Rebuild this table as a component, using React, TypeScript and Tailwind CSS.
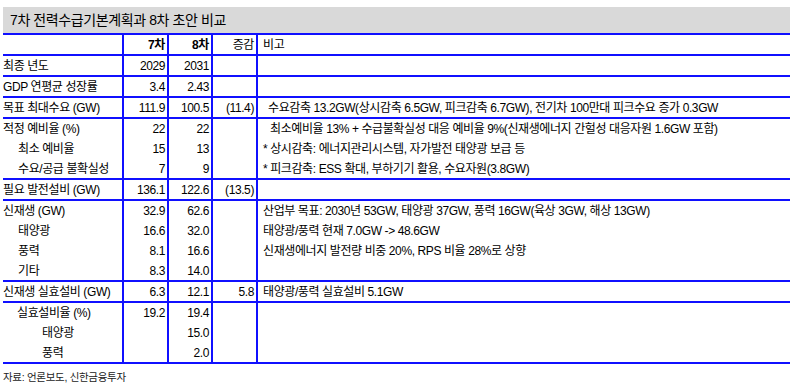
const rows: {
  label: string;
  indent?: string;
  a?: string;
  b?: string;
  d?: string;
  note?: string;
  notePad?: string;
  h: string;
  line?: boolean;
}[] = [
  { label: '최종 년도', a: '2029', b: '2031', h: 'h-[21px]', line: true },
  { label: 'GDP 연평균 성장률', a: '3.4', b: '2.43', h: 'h-[21px]', line: true },
  { label: '목표 최대수요 (GW)', a: '111.9', b: '100.5', d: '(11.4)', note: '수요감축 13.2GW(상시감축 6.5GW, 피크감축 6.7GW), 전기차 100만대 피크수요 증가 0.3GW', notePad: 'pl-[10px]', h: 'h-[21px]', line: true },
  { label: '적정 예비율 (%)', a: '22', b: '22', note: '최소예비율 13% + 수급불확실성 대응 예비율 9%(신재생에너지 간헐성 대응자원 1.6GW 포함)', notePad: 'pl-[12px]', h: 'h-[20px]' },
  { label: '최소 예비율', indent: 'pl-[15px]', a: '15', b: '13', note: '* 상시감축: 에너지관리시스템, 자가발전 태양광 보급 등', h: 'h-[20px]' },
  { label: '수요/공급 불확실성', indent: 'pl-[15px]', a: '7', b: '9', note: '* 피크감축: ESS 확대, 부하기기 활용, 수요자원(3.8GW)', h: 'h-[21px]', line: true },
  { label: '필요 발전설비 (GW)', a: '136.1', b: '122.6', d: '(13.5)', h: 'h-[21px]', line: true },
  { label: '신재생 (GW)', a: '32.9', b: '62.6', note: '산업부 목표: 2030년 53GW, 태양광 37GW, 풍력 16GW(육상 3GW, 해상 13GW)', h: 'h-[20px]' },
  { label: '태양광', indent: 'pl-[15px]', a: '16.6', b: '32.0', note: '태양광/풍력 현재 7.0GW -> 48.6GW', h: 'h-[20px]' },
  { label: '풍력', indent: 'pl-[15px]', a: '8.1', b: '16.6', note: '신재생에너지 발전량 비중 20%, RPS 비율 28%로 상향', h: 'h-[20px]' },
  { label: '기타', indent: 'pl-[15px]', a: '8.3', b: '14.0', h: 'h-[21px]', line: true },
  { label: '신재생 실효설비 (GW)', a: '6.3', b: '12.1', d: '5.8', note: '태양광/풍력 실효설비 5.1GW', h: 'h-[21px]', line: true },
  { label: '실효설비율 (%)', indent: 'pl-[14px]', a: '19.2', b: '19.4', h: 'h-[20px]' },
  { label: '태양광', indent: 'pl-[39px]', b: '15.0', h: 'h-[20px]' },
  { label: '풍력', indent: 'pl-[39px]', b: '2.0', h: 'h-[21px]', line: true },
];

export default function App() {
  return (
    <div className="w-[800px] h-[384px] bg-white pt-[7px] pl-[3px] font-['Liberation_Sans','Noto_Sans_CJK_KR',sans-serif] text-black">
      <div className="w-[787px]">
        {/* Title */}
        <div className="h-[28px] bg-[#d9d9d9] border-b-2 border-[#1010ff] flex items-center pl-[7px] text-[14px] tracking-[-0.4px]">
          7차 전력수급기본계획과 8차 초안 비교
        </div>

        {/* Header */}
        <div className="grid grid-cols-[121px_45px_44px_45px_1fr] h-[21px] border-b-2 border-[#1010ff] text-[12px] tracking-[-0.4px]">
          <div className="border-r-2 border-[#1010ff]"></div>
          <div className="border-r-2 border-[#1010ff] flex items-center justify-end pr-[2px] font-bold">7차</div>
          <div className="border-r-2 border-[#1010ff] flex items-center justify-end pr-[2px] font-bold">8차</div>
          <div className="border-r-2 border-[#1010ff] flex items-center justify-end pr-[2px]">증감</div>
          <div className="flex items-center pl-[5px]">비고</div>
        </div>

        {rows.map((r, i) => (
          <div
            key={i}
            className={`grid grid-cols-[121px_45px_44px_45px_1fr] ${r.h} text-[12px] tracking-[-0.4px] ${r.line ? 'border-b-2 border-[#1010ff]' : ''}`}
          >
            <div className={`border-r-2 border-[#1010ff] flex items-center whitespace-nowrap ${r.indent || ''}`}>{r.label}</div>
            <div className="border-r-2 border-[#1010ff] flex items-center justify-end pr-[2px]">{r.a}</div>
            <div className="border-r-2 border-[#1010ff] flex items-center justify-end pr-[2px]">{r.b}</div>
            <div className="border-r-2 border-[#1010ff] flex items-center justify-end pr-[2px]">{r.d}</div>
            <div className={`flex items-center whitespace-nowrap ${r.notePad || 'pl-[5px]'}`}>{r.note}</div>
          </div>
        ))}
      </div>

      <div className="mt-[6px] text-[10.5px] tracking-[-0.3px] text-[#222]">자료: 언론보도, 신한금융투자</div>
    </div>
  );
}
